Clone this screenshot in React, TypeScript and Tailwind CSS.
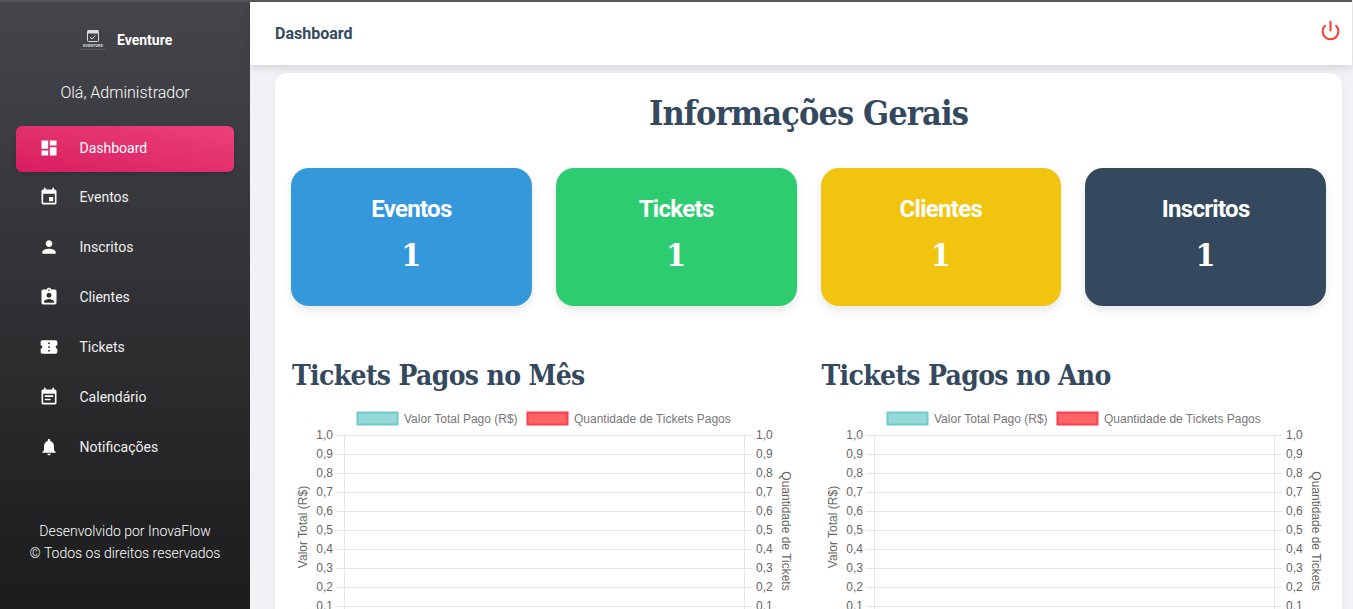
import { MdDashboard, MdEvent, MdPerson, MdAssignmentInd, MdConfirmationNumber, MdEventNote, MdNotifications } from "react-icons/md";
import { Power } from "lucide-react";

const nav = [
  { label: "Dashboard", Icon: MdDashboard, active: true },
  { label: "Eventos", Icon: MdEvent },
  { label: "Inscritos", Icon: MdPerson },
  { label: "Clientes", Icon: MdAssignmentInd },
  { label: "Tickets", Icon: MdConfirmationNumber },
  { label: "Calendário", Icon: MdEventNote },
  { label: "Notificações", Icon: MdNotifications },
];

const cards = [
  { label: "Eventos", bg: "bg-[#3498db]" },
  { label: "Tickets", bg: "bg-[#2ecc71]" },
  { label: "Clientes", bg: "bg-[#f1c40f]" },
  { label: "Inscritos", bg: "bg-[#34495e]" },
];

const ticks = ["1,0", "0,9", "0,8", "0,7", "0,6", "0,5", "0,4", "0,3", "0,2", "0,1"];

function Chart({ title }: { title: string }) {
  return (
    <section>
      <h2 className="ml-px h-[35px] text-[28px] leading-[35px] font-bold text-[#34495e] [font-family:'DejaVu_Serif_Condensed','DejaVu_Serif',serif] tracking-[-0.65px] whitespace-nowrap">
        {title}
      </h2>
      <svg width="506" height="260" className="mt-[17px] block" style={{ fontFamily: "'Liberation Sans', Arial, sans-serif" }}>
        <rect x="66.5" y="2.5" width="40" height="12" fill="#97d9d9" stroke="#6fcaca" strokeWidth="2" />
        <text x="113" y="13" fontSize="12" fill="#777">Valor Total Pago (R$)</text>
        <rect x="236.5" y="2.5" width="40" height="12" fill="#ff6464" stroke="#ff3b50" strokeWidth="2" />
        <text x="283" y="13" fontSize="12" fill="#777">Quantidade de Tickets Pagos</text>
        <line x1="53.5" y1="24" x2="53.5" y2="220" stroke="#e4e4e4" />
        <line x1="453.5" y1="24" x2="453.5" y2="220" stroke="#e4e4e4" />
        {ticks.map((t, i) => {
          const y = Math.round(25 + i * 18.95) + 0.5;
          return (
            <g key={t}>
              <line x1="45" y1={y} x2="461" y2={y} stroke="#e4e4e4" />
              <text x="42" y={y + 3} fontSize="12" fill="#666" textAnchor="end">{t}</text>
              <text x="465" y={y + 3} fontSize="12" fill="#666">{t}</text>
            </g>
          );
        })}
        <text transform="translate(15.5 117) rotate(-90)" fontSize="12" fill="#666" textAnchor="middle">Valor Total (R$)</text>
        <text transform="translate(491 121) rotate(90)" fontSize="12" fill="#666" textAnchor="middle">Quantidade de Tickets</text>
      </svg>
    </section>
  );
}

export default function App() {
  return (
    <div className="flex h-[609px] w-[1353px] overflow-hidden bg-[#f0f2f5] [font-family:Roboto,sans-serif]">
      <aside className="flex h-full w-[250px] shrink-0 flex-col border-t-2 border-[#55565a] bg-gradient-to-b from-[#45464c] to-[#1c1c1d] text-white">
        <div className="flex h-[75px] items-center pl-[80px]">
          <svg width="26" height="24" viewBox="0 0 26 24" className="mr-[11px]">
            <rect x="7.5" y="2.5" width="11" height="11" rx="1" fill="none" stroke="#ddd" strokeWidth="1" />
            <rect x="7.5" y="2.5" width="11" height="3" fill="#ddd" />
            <path d="M10 9l2 2 3.5-3.5" fill="none" stroke="#ddd" strokeWidth="1" />
            <text x="13" y="18.5" fontSize="4" fill="#ddd" textAnchor="middle" fontWeight="700">EVENTURE</text>
            <rect x="1" y="21" width="25" height="1" fill="#5a5a5e" />
          </svg>
          <span className="text-[14px] font-bold leading-none">Eventure</span>
        </div>
        <p className="mt-[4px] text-center text-[16px] leading-[24px] font-light text-white">Olá, Administrador</p>
        <nav className="mt-[21px] flex flex-col px-[16px]">
          {nav.map(({ label, Icon, active }) => (
            <a
              key={label}
              className={
                active
                  ? "mb-[2px] flex h-[46px] items-center rounded-[6px] bg-gradient-to-tr from-[#d81b60] to-[#ec407a] pb-[2px] pl-[23px] text-[14px] shadow-md"
                  : "mb-[4px] flex h-[46px] items-center pl-[23px] text-[14px] text-[#f0f0f0]"
              }
            >
              <Icon className="mr-[20.5px] shrink-0" size={20} color="#fff" />
              {label}
            </a>
          ))}
        </nav>
        <footer className="mt-auto mb-[45px] text-center text-[14px] leading-[22px] font-light text-white">
          <p>Desenvolvido por InovaFlow</p>
          <p>© Todos os direitos reservados</p>
        </footer>
      </aside>
      <div className="flex min-w-0 flex-1 flex-col">
        <header className="relative z-10 mr-px flex h-[65px] shrink-0 items-center justify-between border-t-2 border-[#55565a] bg-white pl-[25px] pr-[11px] shadow-[0_3px_8px_rgba(0,0,0,0.12)]">
          <h1 className="text-[16px] font-bold text-[#34495e]">Dashboard</h1>
          <Power size={21} strokeWidth={2.4} className="mb-[7px] text-[#f44336]" />
        </header>
        <main className="ml-[25px] mr-[11px] mt-[8px] rounded-[12px] bg-white px-[16px] pb-[16px] shadow-[0_2px_10px_rgba(0,0,0,0.05)]">
          <h2 className="mt-[18px] text-center text-[34px] leading-[44px] font-bold text-[#34495e] [font-family:'DejaVu_Serif_Condensed','DejaVu_Serif',serif] tracking-[-0.9px]">
            Informações Gerais
          </h2>
          <div className="mt-[33px] grid grid-cols-4 gap-[24px]">
            {cards.map((c) => (
              <div key={c.label} className={`${c.bg} flex h-[138px] flex-col items-center rounded-[18px] pt-[26px] text-white shadow-[0_4px_10px_rgba(0,0,0,0.1)]`}>
                <span className="text-[24px] leading-[30px] font-bold tracking-[-0.7px]">{c.label}</span>
                <span className="mt-[11px] text-[32px] leading-[40px] font-bold [font-family:'DejaVu_Serif_Condensed','DejaVu_Serif',serif]">1</span>
              </div>
            ))}
          </div>
          <div className="mt-[52px] grid grid-cols-2 gap-[24px]">
            <Chart title="Tickets Pagos no Mês" />
            <Chart title="Tickets Pagos no Ano" />
          </div>
        </main>
      </div>
    </div>
  );
}
